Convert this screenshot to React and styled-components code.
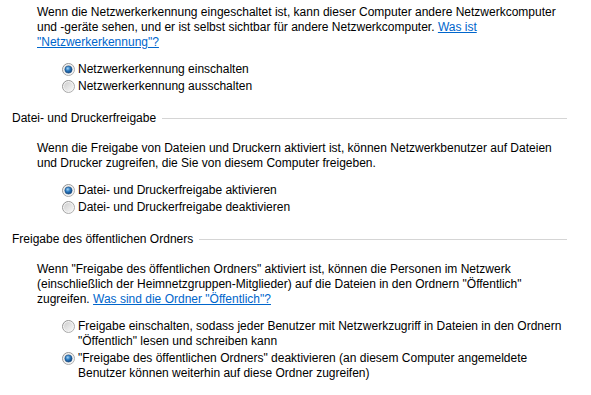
import React from "react";
import styled, { createGlobalStyle } from "styled-components";

const GlobalStyle = createGlobalStyle`
  html, body {
    margin: 0;
    padding: 0;
    background: #ffffff;
  }
  body {
    font-family: "Segoe UI", "Liberation Sans", Arial, sans-serif;
    font-size: 12px;
    color: #000000;
  }
`;

const sections = [
  {
    title: null,
    text: [
      "Wenn die Netzwerkerkennung eingeschaltet ist, kann dieser Computer andere Netzwerkcomputer",
      "und -geräte sehen, und er ist selbst sichtbar für andere Netzwerkcomputer. ",
    ],
    link: ["Was ist", "\"Netzwerkerkennung\"?"],
    options: [
      { lines: ["Netzwerkerkennung einschalten"], checked: true },
      { lines: ["Netzwerkerkennung ausschalten"], checked: false },
    ],
  },
  {
    title: "Datei- und Druckerfreigabe",
    text: [
      "Wenn die Freigabe von Dateien und Druckern aktiviert ist, können Netzwerkbenutzer auf Dateien",
      "und Drucker zugreifen, die Sie von diesem Computer freigeben.",
    ],
    options: [
      { lines: ["Datei- und Druckerfreigabe aktivieren"], checked: true },
      { lines: ["Datei- und Druckerfreigabe deaktivieren"], checked: false },
    ],
  },
  {
    title: "Freigabe des öffentlichen Ordners",
    text: [
      "Wenn \"Freigabe des öffentlichen Ordners\" aktiviert ist, können die Personen im Netzwerk",
      "(einschließlich der Heimnetzgruppen-Mitglieder) auf die Dateien in den Ordnern \"Öffentlich\"",
      "zugreifen. ",
    ],
    link: ["Was sind die Ordner \"Öffentlich\"?"],
    options: [
      {
        lines: [
          "Freigabe einschalten, sodass jeder Benutzer mit Netzwerkzugriff in Dateien in den Ordnern",
          "\"Öffentlich\" lesen und schreiben kann",
        ],
        checked: false,
      },
      {
        lines: [
          "\"Freigabe des öffentlichen Ordners\" deaktivieren (an diesem Computer angemeldete",
          "Benutzer können weiterhin auf diese Ordner zugreifen)",
        ],
        checked: true,
      },
    ],
  },
];

const RadioIcon = ({ checked, id }) => (
  <svg width="13" height="13" viewBox="0 0 13 13">
    <defs>
      <linearGradient id={`ring-${id}`} x1="0" y1="0" x2="1" y2="1">
        <stop offset="0" stopColor="#8a8a8a" />
        <stop offset="1" stopColor="#b8b8b8" />
      </linearGradient>
      <linearGradient id={`fill-${id}`} x1="0" y1="0" x2="1" y2="1">
        <stop offset="0" stopColor="#cfcfcf" />
        <stop offset="1" stopColor="#f6f6f6" />
      </linearGradient>
      <radialGradient id={`dot-${id}`} cx="0.4" cy="0.35" r="0.7">
        <stop offset="0" stopColor="#a6d6f7" />
        <stop offset="0.45" stopColor="#2d7cc2" />
        <stop offset="1" stopColor="#0d3c74" />
      </radialGradient>
    </defs>
    <circle cx="6.5" cy="6.5" r="6" fill="#f4f4f4" stroke={`url(#ring-${id})`} strokeWidth="1" />
    <circle cx="6.5" cy="6.5" r="4.5" fill={`url(#fill-${id})`} />
    {checked && (
      <circle cx="6.5" cy="6.5" r="3.6" fill={`url(#dot-${id})`} stroke="#1b4f84" strokeWidth="0.6" />
    )}
  </svg>
);

const App = () => (
  <>
    <GlobalStyle />
    <Page>
      {sections.map((section, si) => (
        <Section key={si} $first={si === 0}>
          {section.title && (
            <Header>
              <HeaderTitle>{section.title}</HeaderTitle>
              <HeaderRule />
            </Header>
          )}
          <Body>
            <Description>
              {section.text.map((line, li) => (
                <Line key={li}>
                  {line}
                  {li === section.text.length - 1 && section.link && (
                    <Link href="#">{section.link[0]}</Link>
                  )}
                </Line>
              ))}
              {section.link && section.link[1] && (
                <Line>
                  <Link href="#">{section.link[1]}</Link>
                </Line>
              )}
            </Description>
            <Options>
              {section.options.map((opt, oi) => (
                <Option key={oi}>
                  <RadioBox>
                    <RadioIcon checked={opt.checked} id={`${si}-${oi}`} />
                  </RadioBox>
                  <OptionLabel>
                    {opt.lines.map((l, li) => (
                      <Line key={li}>{l}</Line>
                    ))}
                  </OptionLabel>
                </Option>
              ))}
            </Options>
          </Body>
        </Section>
      ))}
    </Page>
  </>
);

const Page = styled.div`
  width: 567px;
  padding: 5px 0 0 12px;
  box-sizing: border-box;
`;

const Section = styled.section`
  display: flex;
  flex-direction: column;
  margin-top: ${(p) => (p.$first ? "0" : "17px")};
`;

const Header = styled.div`
  display: flex;
  align-items: center;
  gap: 6px;
  height: 15px;
  line-height: 15px;
  margin-bottom: 15px;
`;

const HeaderTitle = styled.span`
  white-space: nowrap;
  color: #000000;
`;

const HeaderRule = styled.div`
  flex: 1;
  height: 1px;
  background: #d5d5d5;
`;

const Body = styled.div`
  display: flex;
  flex-direction: column;
  padding-left: 25px;
`;

const Description = styled.div`
  display: flex;
  flex-direction: column;
  line-height: 15px;
  margin-bottom: 12px;
`;

const Line = styled.span`
  display: block;
  white-space: nowrap;
`;

const Link = styled.a`
  color: #0066cc;
  text-decoration: underline;
`;

const Options = styled.div`
  display: flex;
  flex-direction: column;
  gap: 2px;
  padding-left: 25px;
`;

const Option = styled.div`
  display: flex;
  align-items: flex-start;
  gap: 3px;
  line-height: 15px;
`;

const RadioBox = styled.div`
  display: flex;
  align-items: center;
  height: 15px;
  flex-shrink: 0;
`;

const OptionLabel = styled.div`
  display: flex;
  flex-direction: column;
`;

export default App;
